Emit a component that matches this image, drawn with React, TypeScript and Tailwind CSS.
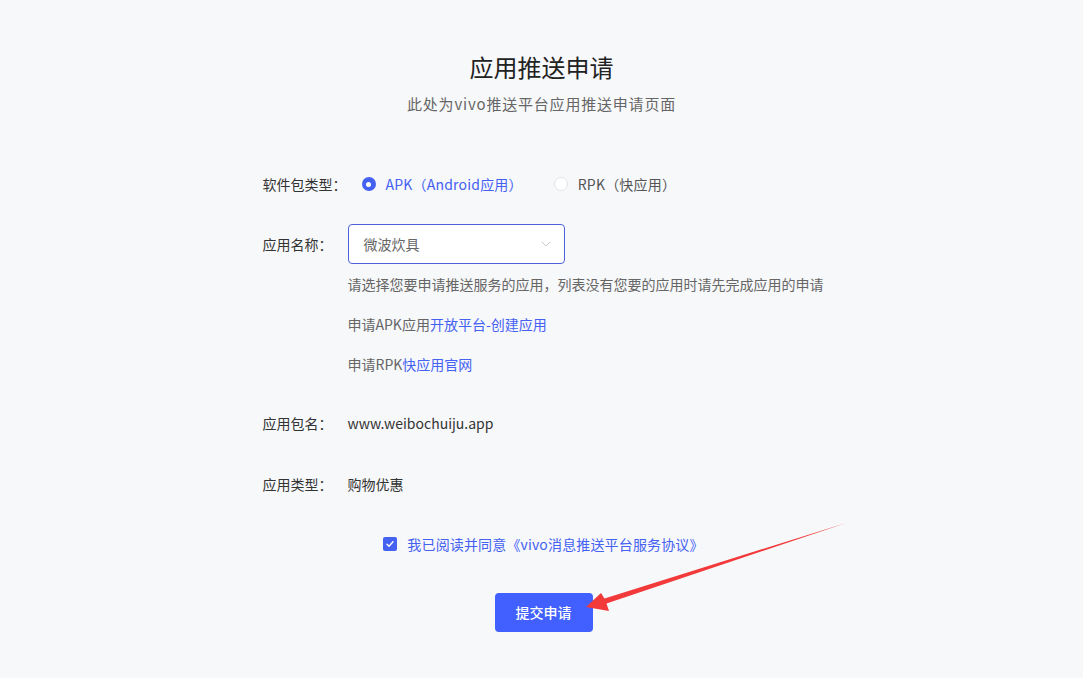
import { ChevronDown } from "lucide-react";

const font = { fontFamily: '"Noto Sans CJK SC", "Liberation Sans", sans-serif' };

const Row = ({ label, children, className }: { label: string; children: React.ReactNode; className?: string }) => (
  <div className={"flex items-center " + (className ?? "")}>
    <div className="w-[85px] shrink-0 text-[14px] leading-[24px] text-[#333]">{label}</div>
    {children}
  </div>
);

const App = () => {
  return (
    <div
      className="relative min-h-[678px] w-full overflow-hidden bg-[#f7f8fa] pt-[51px] text-[#333]"
      style={font}
    >
      {/* Header */}
      <h1 className="text-center text-[24px] leading-[32px] font-normal text-[#222]">应用推送申请</h1>
      <p className="mt-[10px] text-center text-[15px] leading-[22px] tracking-[0.8px] text-[#666]">
        此处为vivo推送平台应用推送申请页面
      </p>

      {/* Form */}
      <div className="mx-auto w-[558px]">
        <Row label="软件包类型：" className="mt-[57px]">
          <label className="flex items-center pl-[14px]">
            <span className="flex h-[14px] w-[14px] items-center justify-center rounded-full bg-[#4461f2]">
              <span className="h-[5px] w-[5px] rounded-full bg-white" />
            </span>
            <span className="ml-[10px] text-[14px] leading-[24px] tracking-[0.2px] text-[#4461f2]">APK（Android应用）</span>
          </label>
          <label className="ml-[31px] flex items-center">
            <span className="h-[14px] w-[14px] rounded-full border border-[#e2e4e8] bg-white" />
            <span className="ml-[10px] text-[14px] leading-[24px] tracking-[0.2px] text-[#555]">RPK（快应用）</span>
          </label>
        </Row>

        <Row label="应用名称：" className="mt-[28px]">
          <div className="flex h-[40px] w-[217px] items-center justify-between rounded-[4px] border border-[#4d62d8] bg-white pr-[10px] pl-[15px]">
            <span className="text-[14px] text-[#666]">微波炊具</span>
            <ChevronDown size={16} strokeWidth={1.2} className="text-[#bdbdbd]" />
          </div>
        </Row>

        <div className="ml-[85px] text-[14px] leading-[20px] whitespace-nowrap text-[#666]">
          <p className="mt-[10px]">请选择您要申请推送服务的应用，列表没有您要的应用时请先完成应用的申请</p>
          <p className="mt-[20px]">
            申请APK应用<a className="text-[#4461f2]">开放平台-创建应用</a>
          </p>
          <p className="mt-[20px]">
            申请RPK<a className="text-[#4461f2]">快应用官网</a>
          </p>
        </div>

        <Row label="应用包名：" className="mt-[37px]">
          <span className="text-[14px] leading-[24px] text-[#333]">www.weibochuiju.app</span>
        </Row>

        <Row label="应用类型：" className="mt-[37px]">
          <span className="text-[14px] leading-[24px] text-[#333]">购物优惠</span>
        </Row>
      </div>

      {/* Agreement */}
      <div className="mt-[36px] flex items-center justify-center pl-[4px]">
        <span className="flex h-[14px] w-[14px] items-center justify-center rounded-[2px] bg-[#4461f2]">
          <svg width="10" height="10" viewBox="0 0 10 10" fill="none">
            <path d="M2 5.2l2 2 4-4.4" stroke="white" strokeWidth="1.4" strokeLinecap="round" strokeLinejoin="round" />
          </svg>
        </span>
        <span className="ml-[10px] text-[14px] leading-[24px] tracking-[0.15px] text-[#4461f2]">
          我已阅读并同意《vivo消息推送平台服务协议》
        </span>
      </div>

      <div className="mt-[37px] flex justify-center pl-[4px]">
        <button className="h-[39px] w-[98px] rounded-[4px] bg-[#4160ff] text-[14px] font-medium text-white">
          提交申请
        </button>
      </div>

      {/* Annotation arrow */}
      <svg className="pointer-events-none absolute top-0 left-0" width="1083" height="678">
        <polygon
          points="846,523 606.5,603.6 609,611 586,607 601,593 604.5,598.4"
          fill="#f23a3a"
        />
      </svg>
    </div>
  );
};

export default App;
